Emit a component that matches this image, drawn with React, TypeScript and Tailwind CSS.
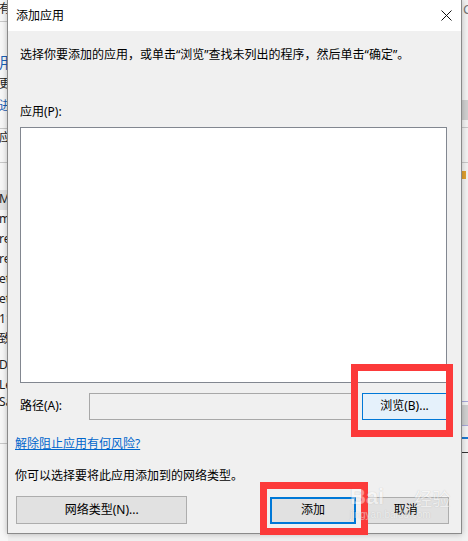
declare global {
  namespace JSX {
    interface IntrinsicElements {
      [elemName: string]: any
    }
  }
}

const font = { fontFamily: '"Noto Sans", "Noto Sans CJK SC", sans-serif' }

// fragments of the window behind the dialog, left edge (height, text, classes)
const leftRows: [number, string, string][] = [
  [22, "有扩", "text-[#222] border-b border-[#c8c8c8]"],
  [31, "", ""],
  [22, "用", "text-[#1a5fb4] text-[15px]"],
  [22, "更", "text-[#222]"],
  [32, "进行", "text-[#1a5fb4] border-b border-[#c8c8c8]"],
  [34, "应用", "text-[#222] border-b border-[#c8c8c8]"],
  [27, "", ""],
  [20, "Mi", "text-[#222] bg-[#e3e3e3]"],
  [20, "mi", "text-[#222]"],
  [20, "re", "text-[#222]"],
  [20, "re", "text-[#222]"],
  [20, "et", "text-[#222]"],
  [20, "et", "text-[#222]"],
  [20, "11", "text-[#222]"],
  [26, "致", "text-[#222]"],
  [20, "Di", "text-[#222]"],
  [17, "Le", "text-[#222]"],
  [51, "Sa", "text-[#222] border-b border-[#c8c8c8]"],
]

function Backdrop() {
  return (
    <div className="absolute inset-0 flex justify-between">
      <div className="flex w-[8px] flex-col overflow-hidden bg-[#f7f7f7]">
        {leftRows.map(([h, t, c], i) => (
          <div key={i} className={`-ml-[1px] shrink-0 whitespace-nowrap text-[12px] leading-[18px] ${c}`} style={{ height: h }}>
            {t}
          </div>
        ))}
      </div>
      <div className="flex w-[6px] flex-col overflow-hidden bg-[#f2f2f2]">
        <div className="h-[100px] shrink-0 pl-[1px] text-[13px] leading-[18px] text-[#777]">C</div>
        <div className="h-[20px] shrink-0 bg-[#cfcfcf]" />
        <div className="h-[8px] shrink-0 border-b border-[#c8c8c8]" />
        <div className="h-[35px] shrink-0 border-b border-[#c8c8c8]" />
        <div className="h-[8px] shrink-0" />
        <div className="h-[8px] w-[4px] shrink-0 bg-[#e0a030]" />
        <div className="h-[223px] shrink-0 border-b border-[#a7a7d8]" />
        <div className="mt-[3px] h-[20px] shrink-0 bg-[#d0d0d0]" />
        <div className="h-[12px] shrink-0 border-t border-[#a7a7d8]" />
        <div className="h-[2px] shrink-0 bg-[#1a78d0]" />
        <div className="h-[14px] shrink-0 border-b border-[#333]" />
      </div>
    </div>
  )
}

function RedBox({ className }: { className: string }) {
  return <div className={`pointer-events-none absolute border-[7px] border-[#fc3a3a] ${className}`} />
}

export default function App() {
  return (
    <div className="relative h-[541px] w-[468px] overflow-hidden bg-[#f0f0f0] text-[12px] text-black" style={font}>
      <Backdrop />

      {/* dialog window */}
      <div className="absolute left-[7px] top-0 flex h-[534px] w-[455px] flex-col border-x border-b border-[#8a8a8a] bg-[#f0f0f0] shadow-[0_0_6px_rgba(0,0,0,0.25)]">
        <div className="flex h-[31px] items-center justify-between bg-white pl-[8px] pr-[8px]">
          <span className="leading-[16px]">添加应用</span>
          <svg width="11" height="11" viewBox="0 0 11 11" className="mr-[1px]">
            <path d="M0.5 0.5 L10.5 10.5 M10.5 0.5 L0.5 10.5" stroke="#111" strokeWidth="1" />
          </svg>
        </div>

        <div className="flex flex-1 flex-col px-[12px]">
          <p className="mt-[16px] leading-[16px]">选择你要添加的应用，或单击“浏览”查找未列出的程序，然后单击“确定”。</p>
          <p className="mt-[41px] leading-[16px]">应用(P):</p>
          <div className="mt-[7px] h-[256px] w-[427px] border border-[#828790] bg-white" />

          <div className="mt-[9px] flex h-[28px] w-[427px] items-center">
            <span className="w-[69px] leading-[16px]">路径(A):</span>
            <div className="mt-[1px] h-[27px] flex-1 border border-[#a8a8a8] bg-[#f0f0f0]" />
            <button className="ml-[5px] flex h-[27px] w-[85px] items-center justify-center border border-[#0078d7] bg-[#e5f1fb] leading-[16px]">
              浏览(B)...
            </button>
          </div>

          <a className="-ml-[5px] mt-[16px] leading-[16px] text-[#0066cc] underline">解除阻止应用有何风险?</a>
          <p className="-ml-[5px] mt-[16px] leading-[16px]">你可以选择要将此应用添加到的网络类型。</p>

          <div className="-ml-[4px] mt-[12px] flex items-center">
            <button className="flex h-[28px] w-[173px] items-center justify-center border border-[#adadad] bg-[#e1e1e1] leading-[16px]">
              网络类型(N)...
            </button>
            <button className="ml-[83px] flex h-[27px] w-[86px] items-center justify-center border-2 border-[#0078d7] bg-[#e1e1e1] leading-[16px]">
              添加
            </button>
            <button className="ml-[7px] flex h-[27px] w-[87px] items-center justify-center border border-[#adadad] bg-[#e1e1e1] leading-[16px]">
              取消
            </button>
          </div>
        </div>
      </div>

      <RedBox className="left-[351px] top-[364px] h-[73px] w-[102px]" />
      <RedBox className="left-[260px] top-[482px] h-[53px] w-[108px]" />

      {/* watermark */}
      <div className="pointer-events-none absolute left-[350px] top-[486px] flex flex-col items-start opacity-45">
        <div className="flex items-end whitespace-nowrap leading-none">
          <span className="text-[22px] font-bold text-white [text-shadow:0_0_1px_#888]" style={{ fontFamily: '"Liberation Sans", Arial, sans-serif' }}>
            Bai
          </span>
          <span className="ml-[30px] text-[18px] text-white [text-shadow:0_0_1px_#888]">经验</span>
        </div>
        <span className="mt-[2px] text-[10px] leading-none text-white [text-shadow:0_0_1px_#888]" style={{ fontFamily: '"Liberation Sans", Arial, sans-serif' }}>
          jingyan.baidu.com
        </span>
      </div>
    </div>
  )
}
